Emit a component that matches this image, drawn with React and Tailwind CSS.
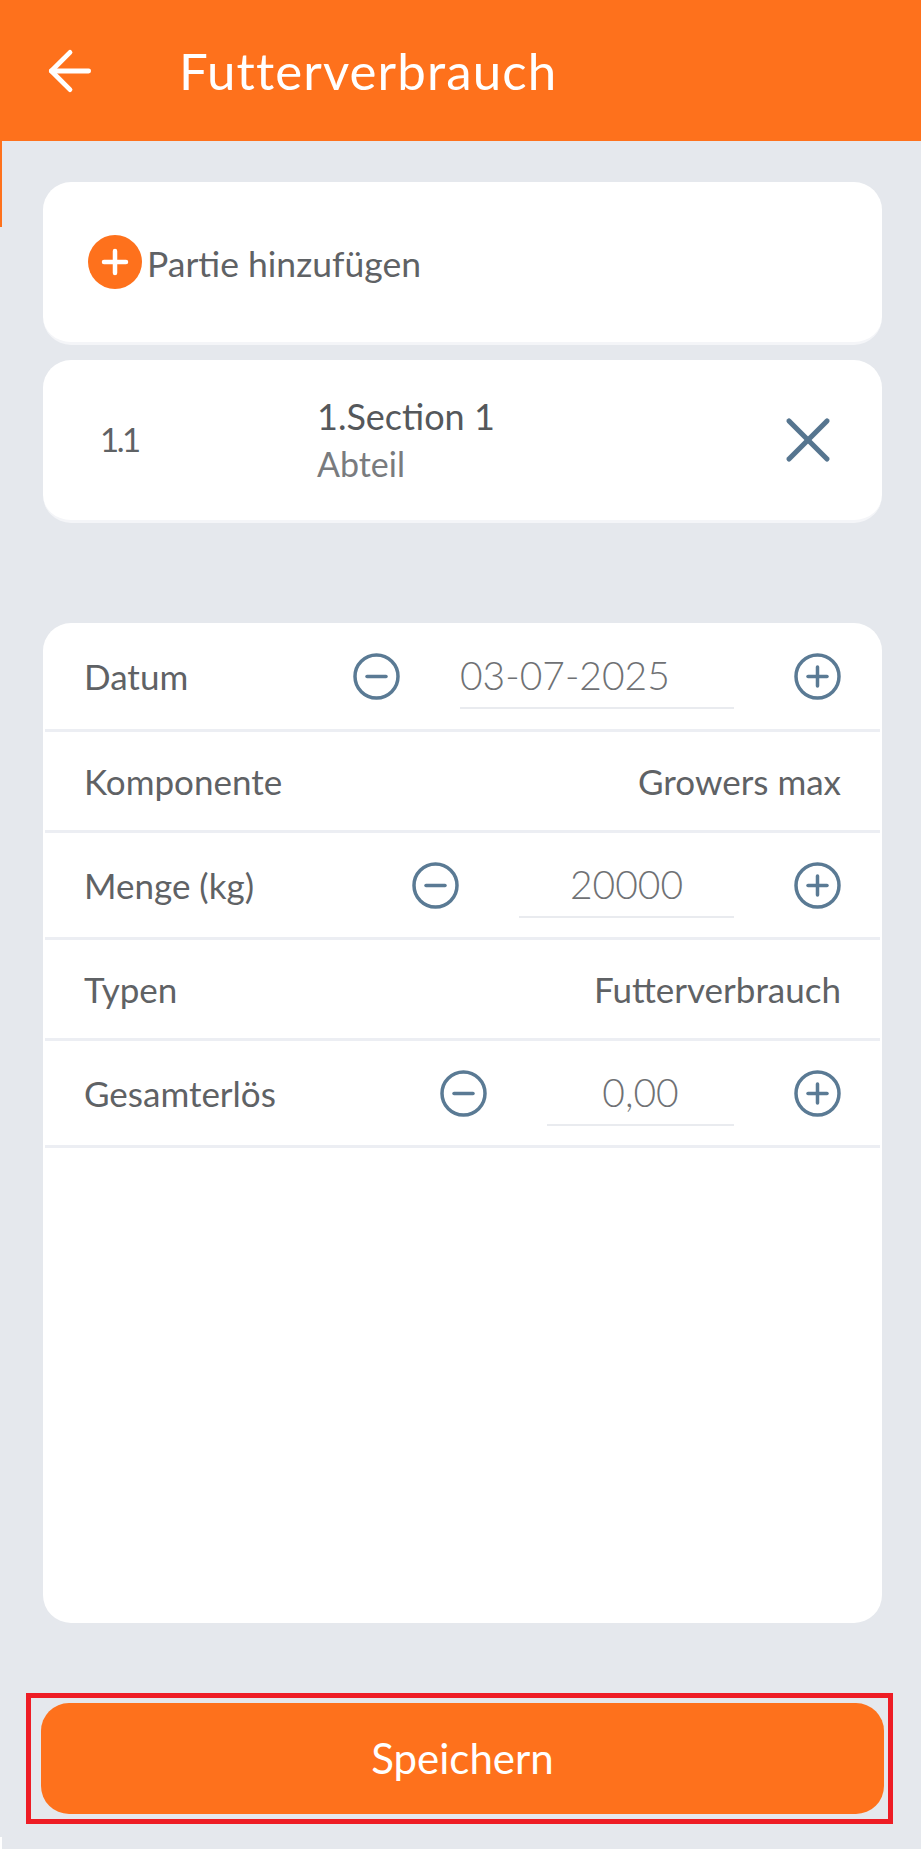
import { ArrowLeft, X } from "lucide-react";

const FONT = "font-['Lato','Noto_Sans',sans-serif]";

function RoundIcon({ plus }) {
  return (
    <svg width="47" height="47" viewBox="0 0 47 47" fill="none" stroke="#5a7a94" strokeLinecap="round" className="shrink-0">
      <circle cx="23.5" cy="23.5" r="21.5" strokeWidth="3.5" />
      <path d="M14 23.5h19" strokeWidth="3.5" />
      {plus && <path d="M23.5 14v19" strokeWidth="3.5" />}
    </svg>
  );
}

function StepperRow({ label, value, inputWidth, height, alignLeft }) {
  return (
    <div className={`${height} flex items-center border-b-[3px] border-[#eceef3] px-[39px]`}>
      <span className="text-[35px] text-[#5f6265]">{label}</span>
      <div className="ml-auto flex items-center gap-[60px]">
        <RoundIcon />
        <div
          className={`${inputWidth} flex h-[66px] items-center border-b-2 border-[#e9ebef] text-[39px] font-light text-[#6f7174] ${alignLeft ? "justify-start" : "justify-center"}`}
        >
          {value}
        </div>
        <RoundIcon plus />
      </div>
    </div>
  );
}

function TextRow({ label, value, height }) {
  return (
    <div className={`${height} flex items-center justify-between border-b-[3px] border-[#eceef3] px-[39px]`}>
      <span className="text-[35px] text-[#5f6265]">{label}</span>
      <span className="text-[35px] text-[#5f6265]">{value}</span>
    </div>
  );
}

export default function App() {
  return (
    <div className={`${FONT} relative flex h-[1849px] w-[921px] flex-col overflow-hidden bg-[#e5e8ed]`}>
      {/* Header */}
      <header className="flex h-[141px] shrink-0 items-center bg-[#fe711c] pl-[38px] text-white">
        <ArrowLeft size={64} strokeWidth={1.8} />
        <h1 className="ml-[77px] pt-[2px] text-[51px] font-normal tracking-[1.1px]">Futterverbrauch</h1>
      </header>

      <main className="flex flex-1 flex-col pl-[43px] pr-[39px] pt-[41px]">
        {/* Add batch */}
        <div className="flex h-[163px] items-center gap-[5px] rounded-[28px] border-b-[3px] border-[#f4f5f8] bg-white pl-[45px]">
          <span className="flex h-[54px] w-[54px] items-center justify-center rounded-full bg-[#fe711c]">
            <svg width="30" height="30" viewBox="0 0 30 30" stroke="#fff" strokeWidth="4.5" strokeLinecap="round">
              <path d="M15 4v22M4 15h22" />
            </svg>
          </span>
          <span className="pt-[4px] text-[35.5px] text-[#5f6265]">Partie hinzufügen</span>
        </div>

        {/* Selected section */}
        <div className="mt-[15px] flex h-[163px] items-center rounded-[28px] border-b-[3px] border-[#f4f5f8] bg-white pl-[57px] pr-[36px]">
          <span className="w-[217px] text-[33px] tracking-[-2.5px] text-[#5f6265]">1.1</span>
          <div className="flex flex-col">
            <span className="text-[36px] leading-[47px] text-[#55585b]">1.Section 1</span>
            <span className="text-[34px] leading-[48px] text-[#797b7e]">Abteil</span>
          </div>
          <X size={76} strokeWidth={1.6} color="#56758f" className="ml-auto" />
        </div>

        {/* Form */}
        <div className="mt-[100px] flex h-[1000px] flex-col rounded-[28px] bg-white px-[2px]">
          <StepperRow label="Datum" value="03-07-2025" inputWidth="w-[274px]" height="h-[109px]" alignLeft />
          <TextRow label="Komponente" value="Growers max" height="h-[101px]" />
          <StepperRow label="Menge (kg)" value="20000" inputWidth="w-[215px]" height="h-[107px]" />
          <TextRow label="Typen" value="Futterverbrauch" height="h-[101px]" />
          <StepperRow label="Gesamterlös" value="0,00" inputWidth="w-[187px]" height="h-[107px]" />
        </div>

        {/* Highlighted save button */}
        <div className="-ml-[17px] -mr-[11px] mt-[70px] border-[5px] border-[#ee1c25] py-[5px] pl-[10px] pr-[4px]">
          <button className="flex h-[111px] w-full items-center justify-center rounded-[28px] bg-[#fe711c] text-[42px] text-white">
            Speichern
          </button>
        </div>
      </main>

      {/* Screenshot edge slivers */}
      <div className="absolute left-0 top-[141px] h-[86px] w-[2px] bg-[#fe711c]" />
      <div className="absolute bottom-0 left-0 h-[12px] w-[2px] bg-white" />
    </div>
  );
}
